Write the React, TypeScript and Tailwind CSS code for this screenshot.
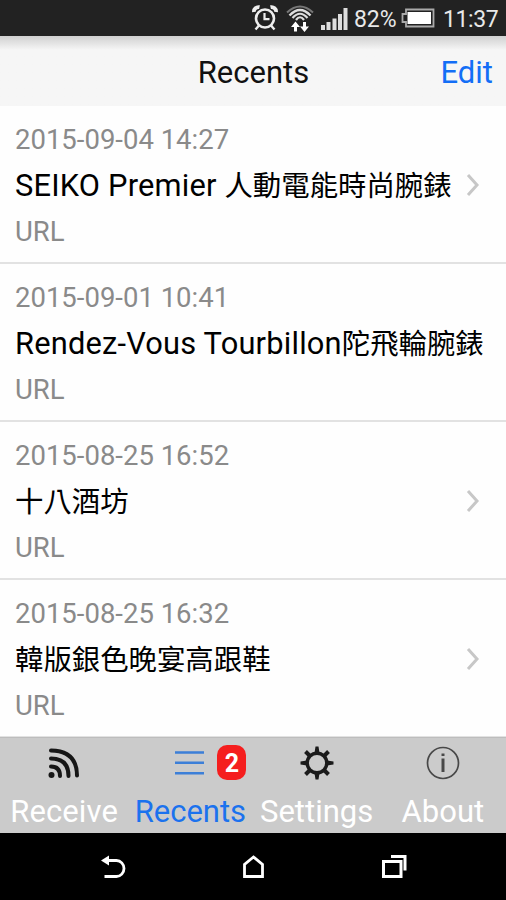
import React from 'react';

type Entry = { date: string; latin: string; cjk: string; chevron: boolean };

const entries: Entry[] = [
  { date: '2015-09-04 14:27', latin: 'SEIKO Premier ', cjk: '人動電能時尚腕錶', chevron: true },
  { date: '2015-09-01 10:41', latin: 'Rendez-Vous Tourbillon', cjk: '陀飛輪腕錶', chevron: false },
  { date: '2015-08-25 16:52', latin: '', cjk: '十八酒坊', chevron: true },
  { date: '2015-08-25 16:32', latin: '', cjk: '韓版銀色晚宴高跟鞋', chevron: true },
];

function StatusBar() {
  return (
    <div className="flex h-9 items-center justify-end bg-[#222222] pr-[9px] text-[#e8e8e8]">
      <svg className="mr-[8px]" width="26" height="28" viewBox="0 0 26 28" fill="none" stroke="#eee">
        <circle cx="13" cy="14.5" r="9" strokeWidth="2.6" />
        <path d="M12.5 9v6.2h5" strokeWidth="2.2" />
        <path d="M2 8C1.500 5 4.500 2.500 7.500 3.200M24 8C24.500 5 21.500 2.500 18.500 3.200" strokeWidth="3.800" />
        <path d="M7 21.500l-3.500 4M19 21.500l3.500 4" strokeWidth="2.400" />
      </svg>
      <svg className="mr-[7px]" width="28" height="30" viewBox="0 0 28 30" fill="none" stroke="#ddd">
        <path d="M1 9.500Q14-2.500 27 9.500" strokeWidth="2" stroke="#777" />
        <path d="M3.500 12.500Q14 1.500 24.500 12.500" strokeWidth="2.400" />
        <path d="M6.500 15Q14 6.500 21.500 15" strokeWidth="2.200" />
        <path d="M10 17Q14 11.500 18 17" strokeWidth="2.200" />
        <path d="M9.500 28.500v-6M18.500 19v6" stroke="#fff" strokeWidth="3" />
        <path d="M5 24l4.500-5.500 4.500 5.500zM14 23.500h9L18.500 29z" fill="#fff" stroke="none" />
      </svg>
      <svg className="mr-[6px] mt-[2px]" width="27" height="22" viewBox="0 0 27 22" fill="#ddd">
        <path d="M0 17h4v5H0zM5.500 14h4v8h-4zM11.500 10.500h4V22h-4zM17 6h4v16h-4zM22.500 0h4v22h-4z" />
      </svg>
      <span className="mt-[3px] w-[42px] whitespace-nowrap text-[23px] leading-9 tracking-[-0.1px]">82%</span>
      <svg className="ml-[5px] mr-[8px]" width="34" height="20" viewBox="0 0 34 20">
        <path d="M5 1.500h27.500v17H5v-4.500H1.500V6H5z" fill="none" stroke="#aaa" strokeWidth="1.800" />
        <path d="M6.500 4h23.500v12H6.500z" fill="#fff" />
      </svg>
      <span className="mt-[3px] w-[54px] whitespace-nowrap text-[23px] leading-9 tracking-[-0.4px]">11:37</span>
    </div>
  );
}

function Header() {
  return (
    <header className="grid h-[70px] grid-cols-3 bg-linear-to-b from-[#d0d0d0] via-[#f6f6f6] via-20% to-[#f6f6f6] text-[31px] leading-[73px]">
      <span />
      <h1 className="pl-px text-center text-[#111]">Recents</h1>
      <span className="pr-[13px] text-right text-[#136ef6]">Edit</span>
    </header>
  );
}

function Row({ entry }: { entry: Entry }) {
  return (
    <li className="flex h-[158px] items-center border-b-2 border-[#e2e2e2] pl-[15px] pr-[26px]">
      <div className="flex h-full grow flex-col whitespace-nowrap pt-[14px]">
        <span className="text-[27.500px] leading-10 text-[#8a8a8a]">{entry.date}</span>
        <span className="mt-[3px] h-[46px] text-[30.800px] leading-[46px] text-black">
          {entry.latin && <span className="whitespace-pre tracking-[0.200px]">{entry.latin}</span>}
          <span className="text-[28.400px]">{entry.cjk}</span>
        </span>
        <span className="mt-[3px] text-[27.500px] leading-10 text-[#8a8a8a]">URL</span>
      </div>
      {entry.chevron && (
        <svg className="mt-[2px] shrink-0" width="14" height="24" viewBox="0 0 14 24" fill="none" stroke="#c7c7c7" strokeWidth="3">
          <path d="M2 2l9 10-9 10" />
        </svg>
      )}
    </li>
  );
}

function TabBar() {
  const tab = 'flex flex-col items-center text-[31px] leading-[50px]';
  return (
    <nav className="flex h-24 shrink-0 flex-col border-t border-[#bdbdbd] bg-[#cbcbcb]">
      <div className="grid grid-cols-4 pl-px pt-px text-white">
        <div className={tab}>
          <svg className="mt-[8px]" width="32" height="32" viewBox="0 0 32 32" fill="none" stroke="#161616" strokeWidth="4" strokeLinecap="round">
            <circle cx="3.500" cy="28" r="3" fill="#161616" stroke="none" />
            <path d="M3 19.500Q12 19.500 12 29M3 11.500Q20.500 11.500 20.500 29M3 3.500Q29 4 29 28.500" />
          </svg>
          <span className="mt-[8px] tracking-[0.1px]">Receive</span>
        </div>
        <div className={tab + ' text-[#1b72ee]'}>
          <div className="relative mt-[8px] flex h-8 items-center">
            <svg width="30" height="26" viewBox="0 0 30 26" stroke="#3c7fd8" strokeWidth="2.400">
              <path d="M0 2.500h29M0 12.800h29M0 23.200h29" />
            </svg>
            <span className="absolute left-[42px] top-[-2px] h-[35px] w-[29px] rounded-[10px] bg-[#f51e1e] text-center text-[25px] font-bold leading-[38px] text-white">2</span>
          </div>
          <span className="mt-[8px]">Recents</span>
        </div>
        <div className={tab}>
          <svg className="mt-[7px]" width="34" height="34" viewBox="-17 -17 34 34" fill="none" stroke="#1b1b1b">
            <circle r="9.800" strokeWidth="3.400" />
            <path d="M-2.500-10L-1.500-16.500h3L2.500-10zM-2.500 10L-1.500 16.500h3L2.500 10zM-10-2.500L-16.500-1.500v3L-10 2.500zM10-2.500L16.500-1.500v3L10 2.500z" fill="#1b1b1b" stroke="none" />
            <path d="M-11.500-11.500L-7-7M11.500-11.500L7-7M-11.500 11.500L-7 7M11.500 11.500L7 7" strokeWidth="4" />
          </svg>
          <span className="mt-[7px]">Settings</span>
        </div>
        <div className={tab}>
          <svg className="mt-[7px]" width="34" height="34" viewBox="-17 -17 34 34" fill="none" stroke="#484848">
            <circle r="15.500" strokeWidth="1.700" />
            <path d="M0-4.500V9" strokeWidth="3" />
            <path d="M0-9.500v2.500" strokeWidth="3" />
          </svg>
          <span className="mt-[7px]">About</span>
        </div>
      </div>
    </nav>
  );
}

function NavigationBar() {
  return (
    <footer className="flex h-[67px] shrink-0 items-center justify-between bg-black pl-[100px] pr-[98px]">
      <svg width="28" height="28" viewBox="0 0 28 28" fill="none" stroke="#fff" strokeWidth="2.800">
        <path d="M7 7.500h9.500a7.500 8 0 0 1 0 16H4.500" />
        <path d="M1 7.500l8-5v10z" fill="#fff" stroke="none" />
      </svg>
      <svg width="24" height="26" viewBox="0 0 24 26" fill="none" stroke="#fff" strokeWidth="2.800">
        <path d="M2.500 22.500V10.500L11.500 3 20.500 10.500v12z" />
      </svg>
      <svg width="28" height="26" viewBox="0 0 28 26" fill="none" stroke="#fff" strokeWidth="3">
        <path d="M3.500 7.500h17.500v15H3.500z" />
        <path d="M11 2.500h14v14" />
      </svg>
    </footer>
  );
}

export default function App() {
  return (
    <div className="flex h-[900px] w-[506px] flex-col overflow-hidden bg-white font-['Roboto','Noto_Sans_CJK_TC',sans-serif]">
      <StatusBar />
      <Header />
      <main className="h-[631px] shrink-0 overflow-hidden bg-[#fefefe]">
        <ul>
          {entries.map((entry) => (
            <Row key={entry.date} entry={entry} />
          ))}
        </ul>
      </main>
      <TabBar />
      <NavigationBar />
    </div>
  );
}
